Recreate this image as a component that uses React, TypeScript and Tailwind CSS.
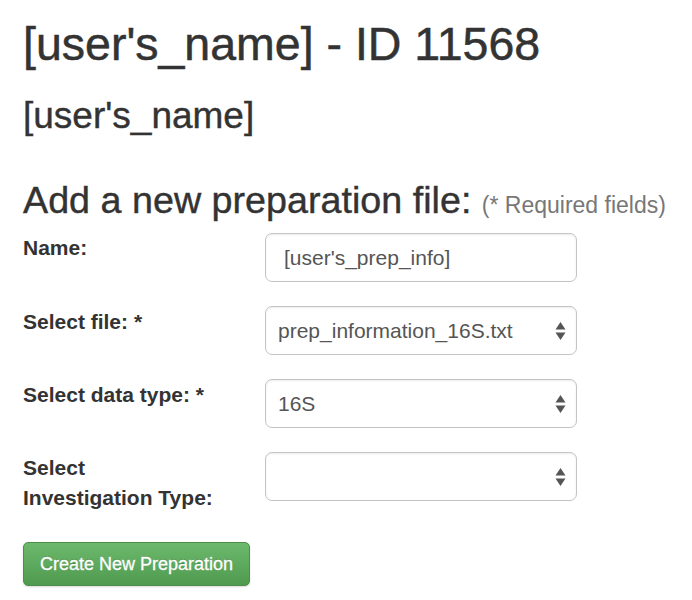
import React from "react";

// Up/down arrows like the native select on macOS
function SelectArrows() {
  return (
    <svg width="11" height="22" viewBox="0 0 11 22" className="absolute right-[10px] top-1/2 -translate-y-1/2">
      <path d="M5.5 2 L10.5 9.5 H0.5 Z" fill="#555" />
      <path d="M5.5 20 L10.5 12.5 H0.5 Z" fill="#555" />
    </svg>
  );
}

function SelectBox({ value }: { value: string }) {
  return (
    <div className="relative h-[49px] w-[312px] rounded-[7px] border border-[#c4c4c4] bg-white shadow-[inset_0_1px_2px_rgba(0,0,0,0.08)]">
      <div className="flex h-full items-center pl-[12px] text-[21px] text-[#555]">{value}</div>
      <SelectArrows />
    </div>
  );
}

const rows = [
  { label: ["Select file: *"], value: "prep_information_16S.txt" },
  { label: ["Select data type: *"], value: "16S" },
  { label: ["Select", "Investigation Type:"], value: "" },
];

export default function App() {
  return (
    <main className="min-h-screen bg-white px-[23px] pt-[14px] text-[#333] [font-family:'Liberation_Sans',Arial,sans-serif]">
      <h1 className="text-[46.5px] leading-[60px] [-webkit-text-stroke:0.5px_#333]">[user's_name] - ID 11568</h1>
      <h2 className="mt-[18px] text-[37px] leading-[48px] [-webkit-text-stroke:0.4px_#333]">[user's_name]</h2>

      <h3 className="mt-[36px] text-[37.7px] leading-[48px] [-webkit-text-stroke:0.4px_#333]">
        Add a new preparation file: <span className="text-[23px] text-[#777] [-webkit-text-stroke:0px]">(* Required fields)</span>
      </h3>

      <form className="mt-[4px] flex flex-col gap-[24px]">
        <div className="flex">
          <label className="w-[242px] text-[21px] font-bold leading-[30px]">Name:</label>
          <div className="flex h-[49px] w-[312px] items-center rounded-[7px] border border-[#c4c4c4] bg-white pl-[18px] text-[21px] text-[#555] shadow-[inset_0_1px_2px_rgba(0,0,0,0.08)]">
            [user's_prep_info]
          </div>
        </div>

        {rows.map((row) => (
          <div key={row.label.join(" ")} className="flex">
            <label className="w-[242px] pt-[1px] text-[21px] font-bold leading-[30px]">
              {row.label.map((l) => (
                <div key={l}>{l}</div>
              ))}
            </label>
            <SelectBox value={row.value} />
          </div>
        ))}

        <div className="mt-[5px]">
          <button
            type="button"
            className="h-[44px] rounded-[5px] border border-[#4a904a] bg-gradient-to-b from-[#6cb96c] to-[#4f9a4f] px-[16px] text-[18px] text-white shadow-[0_1px_2px_rgba(0,0,0,0.15)] [text-shadow:0_-1px_0_rgba(0,0,0,0.2)] [-webkit-text-stroke:0.3px_#fff]"
          >
            Create New Preparation
          </button>
        </div>
      </form>
    </main>
  );
}
